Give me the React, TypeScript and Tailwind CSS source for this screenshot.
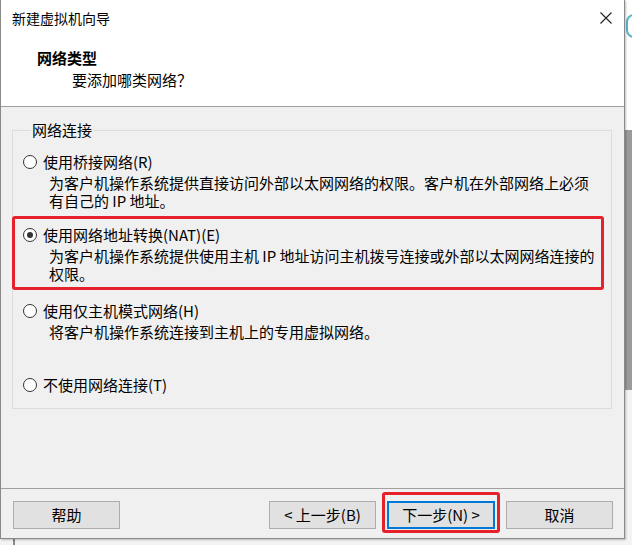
import type { ReactNode } from 'react';

const font = { fontFamily: '"Noto Sans CJK SC", "Microsoft YaHei", sans-serif' };

function Radio({ checked, label }: { checked?: boolean; label: string }) {
  return (
    <div className="flex items-center gap-[6px] h-[20px] leading-[20px] text-[15px] text-black">
      <span className="flex w-[14px] h-[14px] shrink-0 items-center justify-center rounded-full border border-[#333333] bg-white">
        {checked && <span className="w-[6px] h-[6px] rounded-full bg-[#333333]" />}
      </span>
      <span className="whitespace-nowrap">{label}</span>
    </div>
  );
}

function Desc({ children }: { children: ReactNode }) {
  return <div className="pl-[26px] mt-[2px] text-[15px] leading-[18px] text-black whitespace-nowrap">{children}</div>;
}

function Button({ children, primary }: { children: ReactNode; primary?: boolean }) {
  return (
    <button
      className={
        primary
          ? 'w-[108px] h-[28px] border-2 border-[#0078d7] bg-[#e1e1e1] text-[15px] text-black'
          : 'w-[107px] h-[28px] border border-[#adadad] bg-[#e1e1e1] text-[15px] text-black'
      }
    >
      {children}
    </button>
  );
}

export default function App() {
  return (
    <div className="relative w-[632px] h-[545px] overflow-hidden bg-[#f4f4f4]" style={font}>
      {/* bits of the window behind */}
      <div className="absolute right-0 top-0 w-[8px] h-[130px] bg-white" />
      <div className="absolute right-[-10px] top-[14px] w-[16px] h-[24px] rounded-full border-2 border-[#5ab4c8]" />
      <div className="absolute right-0 top-[130px] w-[8px] h-[260px] bg-[#9b9b9b]" />
      <div className="absolute left-[13px] bottom-0 w-[2px] h-[7px] bg-[#8a8a8a]" />

      <div className="relative flex flex-col w-[625px] h-[539px] border-l border-r border-b border-[#8a8a8a] bg-[#f0f0f0] shadow-[1px_1px_2px_rgba(0,0,0,0.25)]">
        {/* Header */}
        <div className="h-[107px] bg-white border-b border-[#a0a0a0]">
          <div className="flex h-[36px] items-center justify-between pl-[11px] pr-[12px] text-[14px] text-black">
            <span>新建虚拟机向导</span>
            <svg width="12" height="12" viewBox="0 0 12 12" fill="none" stroke="#222" strokeWidth="1.1">
              <path d="M0.5 0.5L11.5 11.5M11.5 0.5L0.5 11.5" />
            </svg>
          </div>
          <div className="mt-[12px] pl-[36px] text-[15px] leading-[20px] font-bold text-black">网络类型</div>
          <div className="mt-[2px] pl-[71px] text-[15px] leading-[20px] text-black">要添加哪类网络？</div>
        </div>

        {/* Body */}
        <div className="flex-1">
          <fieldset className="mt-[13px] ml-[11px] w-[600px] border border-[#dcdcdc] pl-[10px] pr-[10px] pt-[12px] pb-[13px]">
            <legend className="ml-[8px] px-[1px] text-[15px] leading-[20px] text-black">网络连接</legend>

            <Radio label="使用桥接网络(R)" />
            <Desc>
              为客户机操作系统提供直接访问外部以太网网络的权限。客户机在外部网络上必须
              <br />
              有自己的 IP 地址。
            </Desc>

            <div className="relative mt-[15px]">
              <Radio checked label="使用网络地址转换(NAT)(E)" />
              <Desc>
                为客户机操作系统提供使用主机 IP 地址访问主机拨号连接或外部以太网网络连接的
                <br />
                权限。
              </Desc>
              <div className="absolute -top-[9px] -bottom-[7px] -left-[11px] -right-[3px] rounded-[3px] border-[3px] border-[#e5212b]" />
            </div>

            <div className="mt-[18px]">
              <Radio label="使用仅主机模式网络(H)" />
              <Desc>将客户机操作系统连接到主机上的专用虚拟网络。</Desc>
            </div>

            <div className="mt-[34px]">
              <Radio label="不使用网络连接(T)" />
            </div>
          </fieldset>
        </div>

        {/* Footer */}
        <div className="border-t border-[#a0a0a0] pt-[12px] pb-[9px] pl-[12px] pr-[11px] flex items-center">
          <Button>帮助</Button>
          <div className="flex-1" />
          <Button>&lt; 上一步(B)</Button>
          <div className="relative ml-[11px]">
            <Button primary>下一步(N) &gt;</Button>
            <div className="absolute -top-[9px] -bottom-[4px] -left-[5px] -right-[5px] rounded-[3px] border-[3px] border-[#e5212b]" />
          </div>
          <div className="ml-[11px]">
            <Button>取消</Button>
          </div>
        </div>
      </div>
    </div>
  );
}
